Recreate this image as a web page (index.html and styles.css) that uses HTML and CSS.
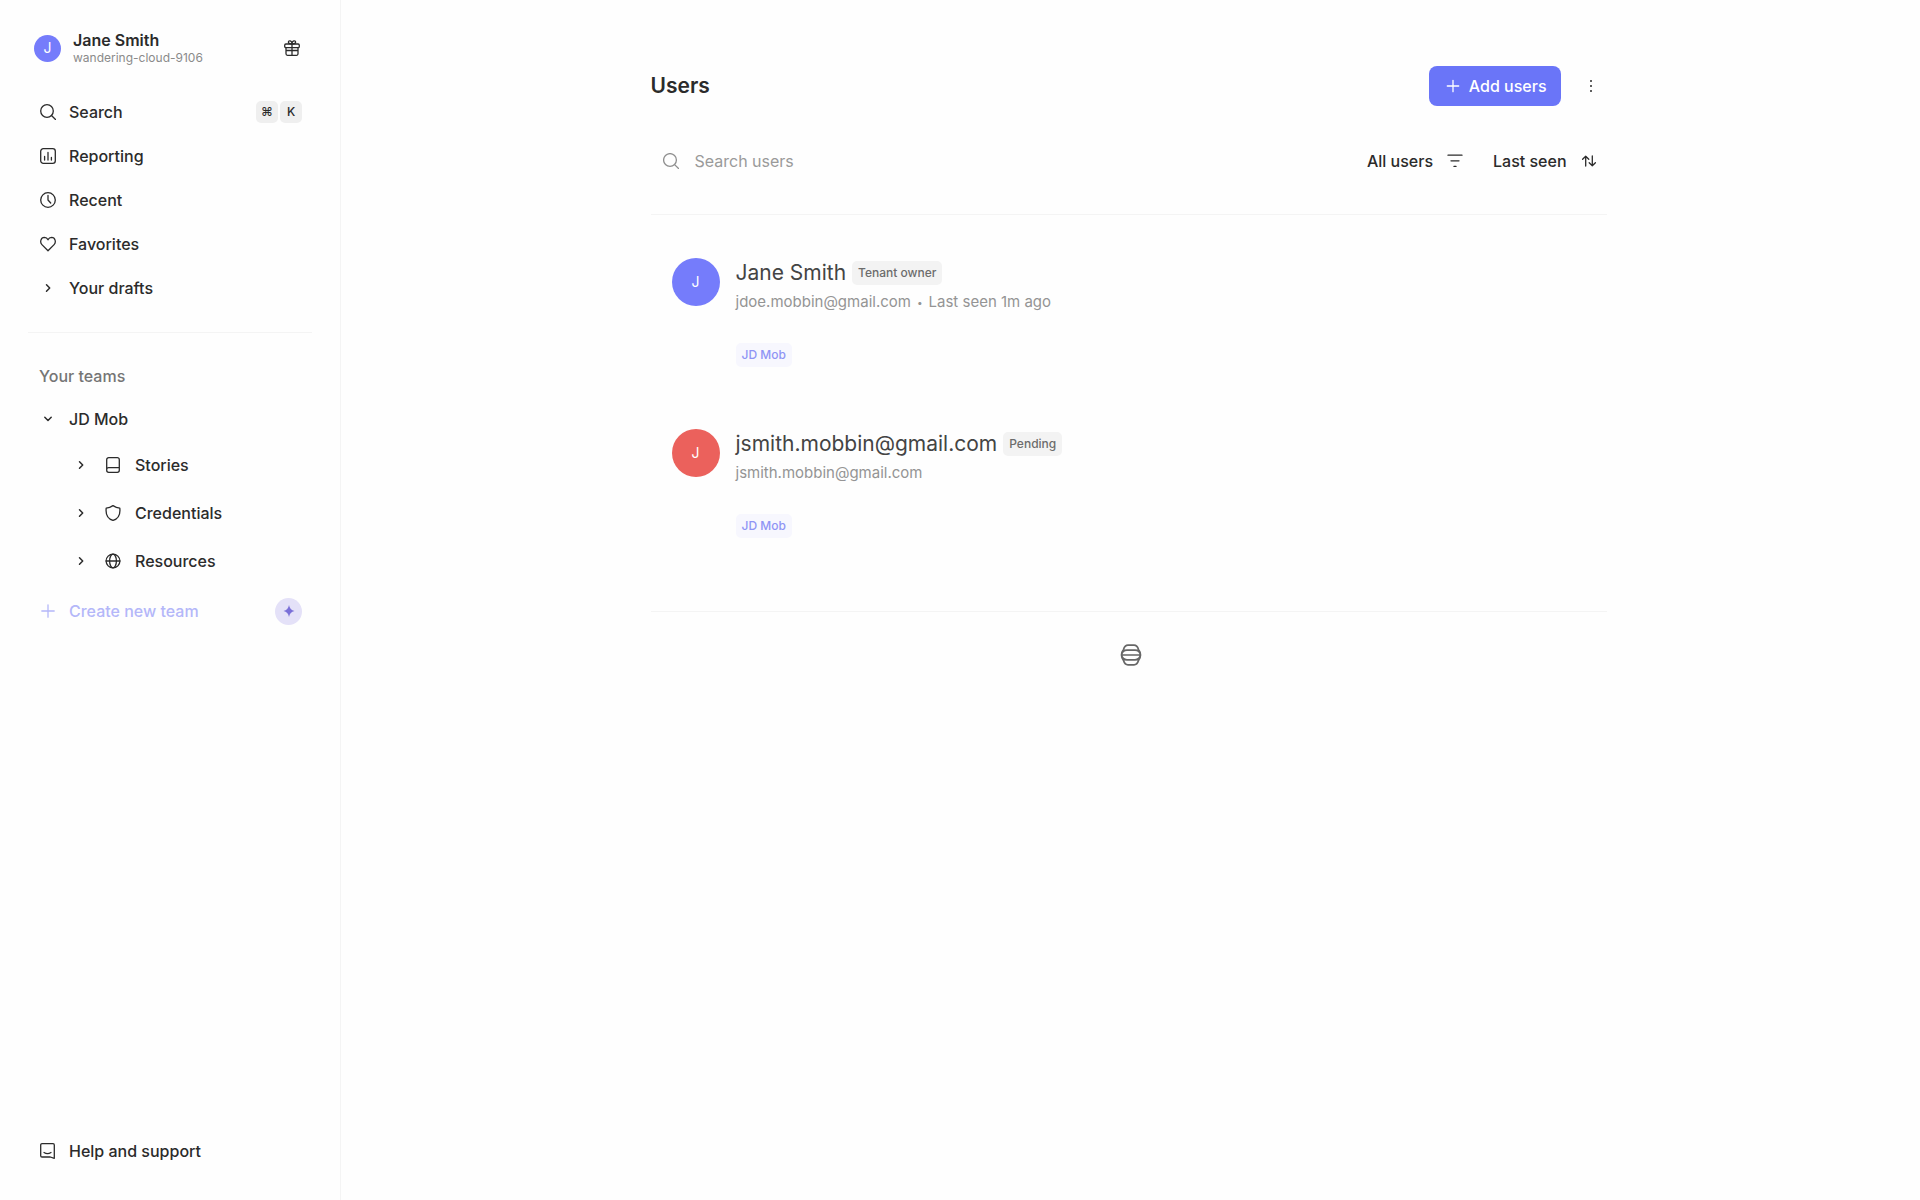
FILE: index.html
```html
<!DOCTYPE html>
<html lang="en">
<head>
<meta charset="utf-8">
<meta name="viewport" content="width=device-width, initial-scale=1">
<title>Users</title>
<link rel="stylesheet" href="styles.css">
</head>
<body>
<div class="app">
  <aside class="sidebar">
    <header class="account">
      <span class="avatar avatar-small">J</span>
      <div class="account-text">
        <span class="account-name">Jane Smith</span>
        <span class="account-tenant">wandering-cloud-9106</span>
      </div>
      <button class="icon-button gift" type="button" aria-label="What's new">
        <svg class="icon" viewBox="0 0 16 16"><rect x=".7" y="4" width="14.6" height="3.6" rx="1.2"/><path d="M2 7.6v6.2a1.5 1.5 0 0 0 1.5 1.5h9a1.5 1.5 0 0 0 1.5-1.5V7.600M8 4v11.300M2 10.500h12M8 4C7 4 4.400 3.900 4.400 2.200 4.400.2 8 0 8 4c0-4 3.600-3.800 3.600-1.800C11.600 3.900 9 4 8 4"/></svg>
      </button>
    </header>

    <nav class="nav" aria-label="Main">
      <a class="row" href="#search">
        <svg class="icon" viewBox="0 0 16 16"><circle cx="7" cy="7" r="6.300"/><path d="m11.500 11.500 4 4"/></svg>
        <span class="row-label">Search</span>
        <span class="keys"><kbd class="key">⌘</kbd><kbd class="key">K</kbd></span>
      </a>
      <a class="row" href="#reporting">
        <svg class="icon" viewBox="0 0 16 16"><rect x=".7" y=".7" width="14.600" height="14.600" rx="2.600"/><path d="M4.600 8.500v3.500M8 4.500V12M11.400 9.500V12"/></svg>
        <span class="row-label">Reporting</span>
      </a>
      <a class="row" href="#recent">
        <svg class="icon" viewBox="0 0 16 16"><circle cx="8" cy="8" r="7.300"/><path d="M8 3.500V8l2.700 3"/></svg>
        <span class="row-label">Recent</span>
      </a>
      <a class="row" href="#favorites">
        <svg class="icon" viewBox="0 0 16 16"><path d="M8 14.800 1.900 8.600C-.4 6.200.8 1.500 4.400 1.400 6.300 1.400 7.400 2.500 8 3.800c.6-1.300 1.700-2.400 3.600-2.400 3.600.1 4.800 4.800 2.500 7.200z"/></svg>
        <span class="row-label">Favorites</span>
      </a>
      <a class="row" href="#drafts">
        <svg class="icon chevron" viewBox="0 0 16 16"><path d="m6.500 4.800 3.200 3.200-3.200 3.200"/></svg>
        <span class="row-label">Your drafts</span>
      </a>
    </nav>

    <nav class="teams" aria-labelledby="teams-title">
      <h2 class="teams-title" id="teams-title">Your teams</h2>
      <a class="row" href="#jd-mob">
        <svg class="icon chevron" viewBox="0 0 16 16"><path d="M4.800 6.300 8 9.500l3.200-3.200"/></svg>
        <span class="row-label">JD Mob</span>
      </a>
      <a class="row row-child" href="#stories">
        <svg class="icon chevron" viewBox="0 0 16 16"><path d="m6.500 4.800 3.200 3.200-3.200 3.200"/></svg>
        <svg class="icon" viewBox="0 0 16 16"><path d="M14.300 10.600V2.700a2 2 0 0 0-2-2H3.700a2 2 0 0 0-2 2v10.600a2 2 0 0 0 2 2h8.600a2 2 0 0 0 2-2v-2.700H3.700a2 2 0 0 0-2 2"/></svg>
        <span class="row-label">Stories</span>
      </a>
      <a class="row row-child" href="#credentials">
        <svg class="icon chevron" viewBox="0 0 16 16"><path d="m6.500 4.800 3.200 3.200-3.200 3.200"/></svg>
        <svg class="icon" viewBox="0 0 16 16"><path d="M8 .6C6 2 3.500 2.900 1.200 3.100.7 7.500 1.500 13.500 8 15.400c6.500-1.900 7.300-7.900 6.800-12.300C12.500 2.900 10 2 8 .6z"/></svg>
        <span class="row-label">Credentials</span>
      </a>
      <a class="row row-child" href="#resources">
        <svg class="icon chevron" viewBox="0 0 16 16"><path d="m6.500 4.800 3.200 3.200-3.200 3.200"/></svg>
        <svg class="icon" viewBox="0 0 16 16"><circle cx="8" cy="8" r="6.900"/><ellipse cx="8" cy="8" rx="3.400" ry="6.900"/><path d="M1.100 8h13.800"/></svg>
        <span class="row-label">Resources</span>
      </a>
      <a class="row row-create" href="#create">
        <svg class="icon" viewBox="0 0 16 16"><path d="M8 1.800v12.400M1.800 8h12.400"/></svg>
        <span class="row-label">Create new team</span>
        <span class="spark"><svg class="spark-icon" viewBox="0 0 12 12"><path d="M6 0Q6.800 5 11.500 6 6.800 7 6 12 5.200 7 .5 6 5.200 5 6 0z"/></svg></span>
      </a>
    </nav>

    <a class="row row-help" href="#help">
      <svg class="icon" viewBox="0 0 16 16"><path d="M14.300 15.300V2a1.300 1.300 0 0 0-1.300-1.300H2A1.300 1.300 0 0 0 .7 2v10.700A1.300 1.300 0 0 0 2 14h8.300zM4 9.500q3.500 2.300 7 0"/></svg>
      <span class="row-label">Help and support</span>
    </a>
  </aside>

  <main class="main">
    <div class="content">
      <header class="page-head">
        <h1 class="page-title">Users</h1>
        <button class="add-button" type="button">
          <svg class="icon" viewBox="0 0 16 16"><path d="M8 2.300v11.400M2.300 8h11.400"/></svg>
          Add users
        </button>
        <button class="icon-button" type="button" aria-label="More">
          <svg class="icon dots" viewBox="0 0 16 16"><circle cx="8" cy="3" r="1"/><circle cx="8" cy="8" r="1"/><circle cx="8" cy="13" r="1"/></svg>
        </button>
      </header>

      <div class="toolbar">
        <label class="search">
          <svg class="icon" viewBox="0 0 16 16"><circle cx="7" cy="7" r="6.400"/><path d="m11.600 11.600 4 4"/></svg>
          <input class="search-input" type="search" placeholder="Search users" aria-label="Search users">
        </label>
        <button class="tool-button" type="button">
          All users
          <svg class="icon" viewBox="0 0 16 16"><path d="M1 2.200h14M4 7.800h8M7 13.400h2"/></svg>
        </button>
        <button class="tool-button" type="button">
          Last seen
          <svg class="icon" viewBox="0 0 16 16"><path d="M4.700 13V3.200M1.600 6.300l3.100-3.100 3.100 3.100M11.300 3v9.800M8.200 9.700l3.100 3.100 3.100-3.100"/></svg>
        </button>
      </div>

      <ul class="users">
        <li class="user">
          <span class="avatar avatar-large">J</span>
          <div class="user-body">
            <div class="user-line">
              <h2 class="user-name">Jane Smith</h2>
              <span class="tag">Tenant owner</span>
            </div>
            <p class="user-meta"><span>jdoe.mobbin@gmail.com</span><span class="bullet">•</span><span>Last seen 1m ago</span></p>
            <a class="tag tag-team" href="#jd-mob">JD Mob</a>
          </div>
        </li>
        <li class="user">
          <span class="avatar avatar-large avatar-red">J</span>
          <div class="user-body">
            <div class="user-line">
              <h2 class="user-name">jsmith.mobbin@gmail.com</h2>
              <span class="tag">Pending</span>
            </div>
            <p class="user-meta"><span>jsmith.mobbin@gmail.com</span></p>
            <a class="tag tag-team" href="#jd-mob">JD Mob</a>
          </div>
        </li>
      </ul>

      <footer class="foot">
        <svg class="logo" viewBox="0 0 22 22"><path d="M8 1.200h6q3.200 0 4.500 4.300Q20.500 8 20.500 11t-2 5.500q-1.300 4.300-4.500 4.300H8q-3.200 0-4.500-4.300Q1.500 14 1.500 11t2-5.500Q4.800 1.200 8 1.200zM1.500 11Q2.500 6.200 7 6.200h8q4.500 0 5.500 4.800-1 4.800-5.500 4.800H7Q2.500 15.800 1.500 11zM1.500 11h19"/></svg>
      </footer>
    </div>
  </main>
</div>
</body>
</html>
```
FILE: styles.css
```css
* {
  box-sizing: border-box;
}

body {
  margin: 0;
  background: #fefefe;
  color: #2b2b2b;
  font-family: Inter, "Liberation Sans", sans-serif;
  font-size: 16px;
  font-weight: 500;
  line-height: 24px;
}

h1, h2, p, ul {
  margin: 0;
  padding: 0;
}

ul {
  list-style: none;
}

a {
  color: inherit;
  text-decoration: none;
}

button {
  border: 0;
  padding: 0;
  background: none;
  color: inherit;
  font: inherit;
  cursor: pointer;
}

.app {
  display: flex;
  min-height: 100vh;
}

.icon {
  flex: none;
  width: 16px;
  height: 16px;
  fill: none;
  stroke: currentColor;
  stroke-width: 1.3;
  stroke-linecap: round;
  stroke-linejoin: round;
}

.chevron {
  stroke-width: 1.5;
}

.icon-button {
  display: flex;
  align-items: center;
  justify-content: center;
  width: 32px;
  height: 32px;
}

.dots {
  fill: currentColor;
  stroke: none;
}

.avatar {
  display: flex;
  flex: none;
  align-items: center;
  justify-content: center;
  border-radius: 50%;
  background: #757cfb;
  color: #fff;
  font-size: 14px;
  font-weight: 400;
}

.avatar-small {
  width: 27px;
  height: 27px;
}

.avatar-large {
  width: 48px;
  height: 48px;
}

.avatar-red {
  background: #eb615c;
}

/* Sidebar */

.sidebar {
  display: flex;
  flex: none;
  flex-direction: column;
  width: 341px;
  border-right: 1px solid #f4f4f4;
  padding: 0 28px;
}

.account {
  display: flex;
  align-items: center;
  height: 90px;
  padding: 6px 4px 0 6px;
}

.account-text {
  display: flex;
  flex: 1;
  flex-direction: column;
  margin-left: 12px;
}

.account-name {
  font-weight: 600;
  line-height: 20px;
}

.account-tenant {
  color: #8a8a8a;
  font-size: 12px;
  font-weight: 400;
  line-height: 16px;
}

.nav {
  border-bottom: 1px solid #f4f4f4;
  padding-bottom: 22px;
}

.row {
  display: flex;
  align-items: center;
  height: 44px;
  padding: 0 10px 0 12px;
}

.row-label {
  flex: 1;
  margin-left: 13px;
}

.keys {
  display: flex;
  gap: 2px;
}

.key {
  width: 22px;
  border-radius: 5px;
  background: #efefef;
  font-family: inherit;
  font-size: 12px;
  line-height: 22px;
  text-align: center;
}

.teams {
  padding-top: 22px;
}

.teams-title {
  padding-left: 11px;
  color: #757575;
  font-size: 16px;
  font-weight: 500;
  line-height: 42px;
}

.row-child {
  gap: 16px;
  height: 48px;
  padding-left: 45px;
}

.row-child .row-label {
  margin-left: -2px;
}

.row-create {
  margin-top: 4px;
  color: #b4b7f9;
}

.spark {
  display: flex;
  align-items: center;
  justify-content: center;
  width: 27px;
  height: 27px;
  border-radius: 50%;
  background: #e4e1f8;
}

.spark-icon {
  width: 12px;
  height: 12px;
  fill: #7a6fd8;
}

.row-help {
  margin-top: auto;
  margin-bottom: 27px;
}

/* Users page */

.main {
  flex: 1;
  padding: 66px 36px 66px 32px;
}

.content {
  max-width: 956px;
  margin: 0 auto;
}

.page-head {
  display: flex;
  align-items: center;
}

.page-title {
  flex: 1;
  font-size: 21px;
  font-weight: 600;
  line-height: 32px;
}

.add-button {
  display: flex;
  align-items: center;
  gap: 8px;
  height: 40px;
  margin-right: 14px;
  border-radius: 8px;
  padding: 0 14px 0 16px;
  background: #6a75f8;
  color: #fff;
}

.toolbar {
  display: flex;
  align-items: center;
  gap: 30px;
  height: 109px;
  border-bottom: 1px solid #f4f4f4;
  padding: 2px 10px 0 12px;
}

.search {
  display: flex;
  flex: 1;
  align-items: center;
  gap: 16px;
  color: #8f8f8f;
}

.search-input {
  flex: 1;
  border: 0;
  padding: 0;
  outline: 0;
  background: none;
  color: #2b2b2b;
  font: inherit;
  font-weight: 400;
}

.search-input::placeholder {
  color: #9a9a9a;
}

.tool-button {
  display: flex;
  align-items: center;
  gap: 14px;
}

.users {
  border-bottom: 1px solid #f4f4f4;
  padding: 43px 21px 11px;
}

.user {
  display: flex;
  gap: 16px;
  min-height: 171px;
}

.user-line {
  display: flex;
  align-items: center;
  gap: 6px;
}

.user-name {
  color: #444;
  font-size: 21px;
  font-weight: 400;
  line-height: 30px;
}

.user-meta {
  display: flex;
  gap: 6px;
  margin-bottom: 25px;
  color: #949494;
  font-size: 15px;
  font-weight: 400;
  line-height: 28px;
}

.bullet {
  font-size: 10px;
}

.tag {
  display: inline-block;
  border-radius: 5px;
  padding: 0 6px;
  background: #f3f3f3;
  color: #6c6c6c;
  font-size: 12px;
  line-height: 24px;
}

.tag-team {
  background: #f7f7fe;
  color: #8f94f5;
}

.foot {
  display: flex;
  justify-content: center;
  padding: 32px 0 32px 4px;
}

.logo {
  width: 22px;
  height: 22px;
  fill: none;
  stroke: #666;
  stroke-width: 1.7;
}
```
